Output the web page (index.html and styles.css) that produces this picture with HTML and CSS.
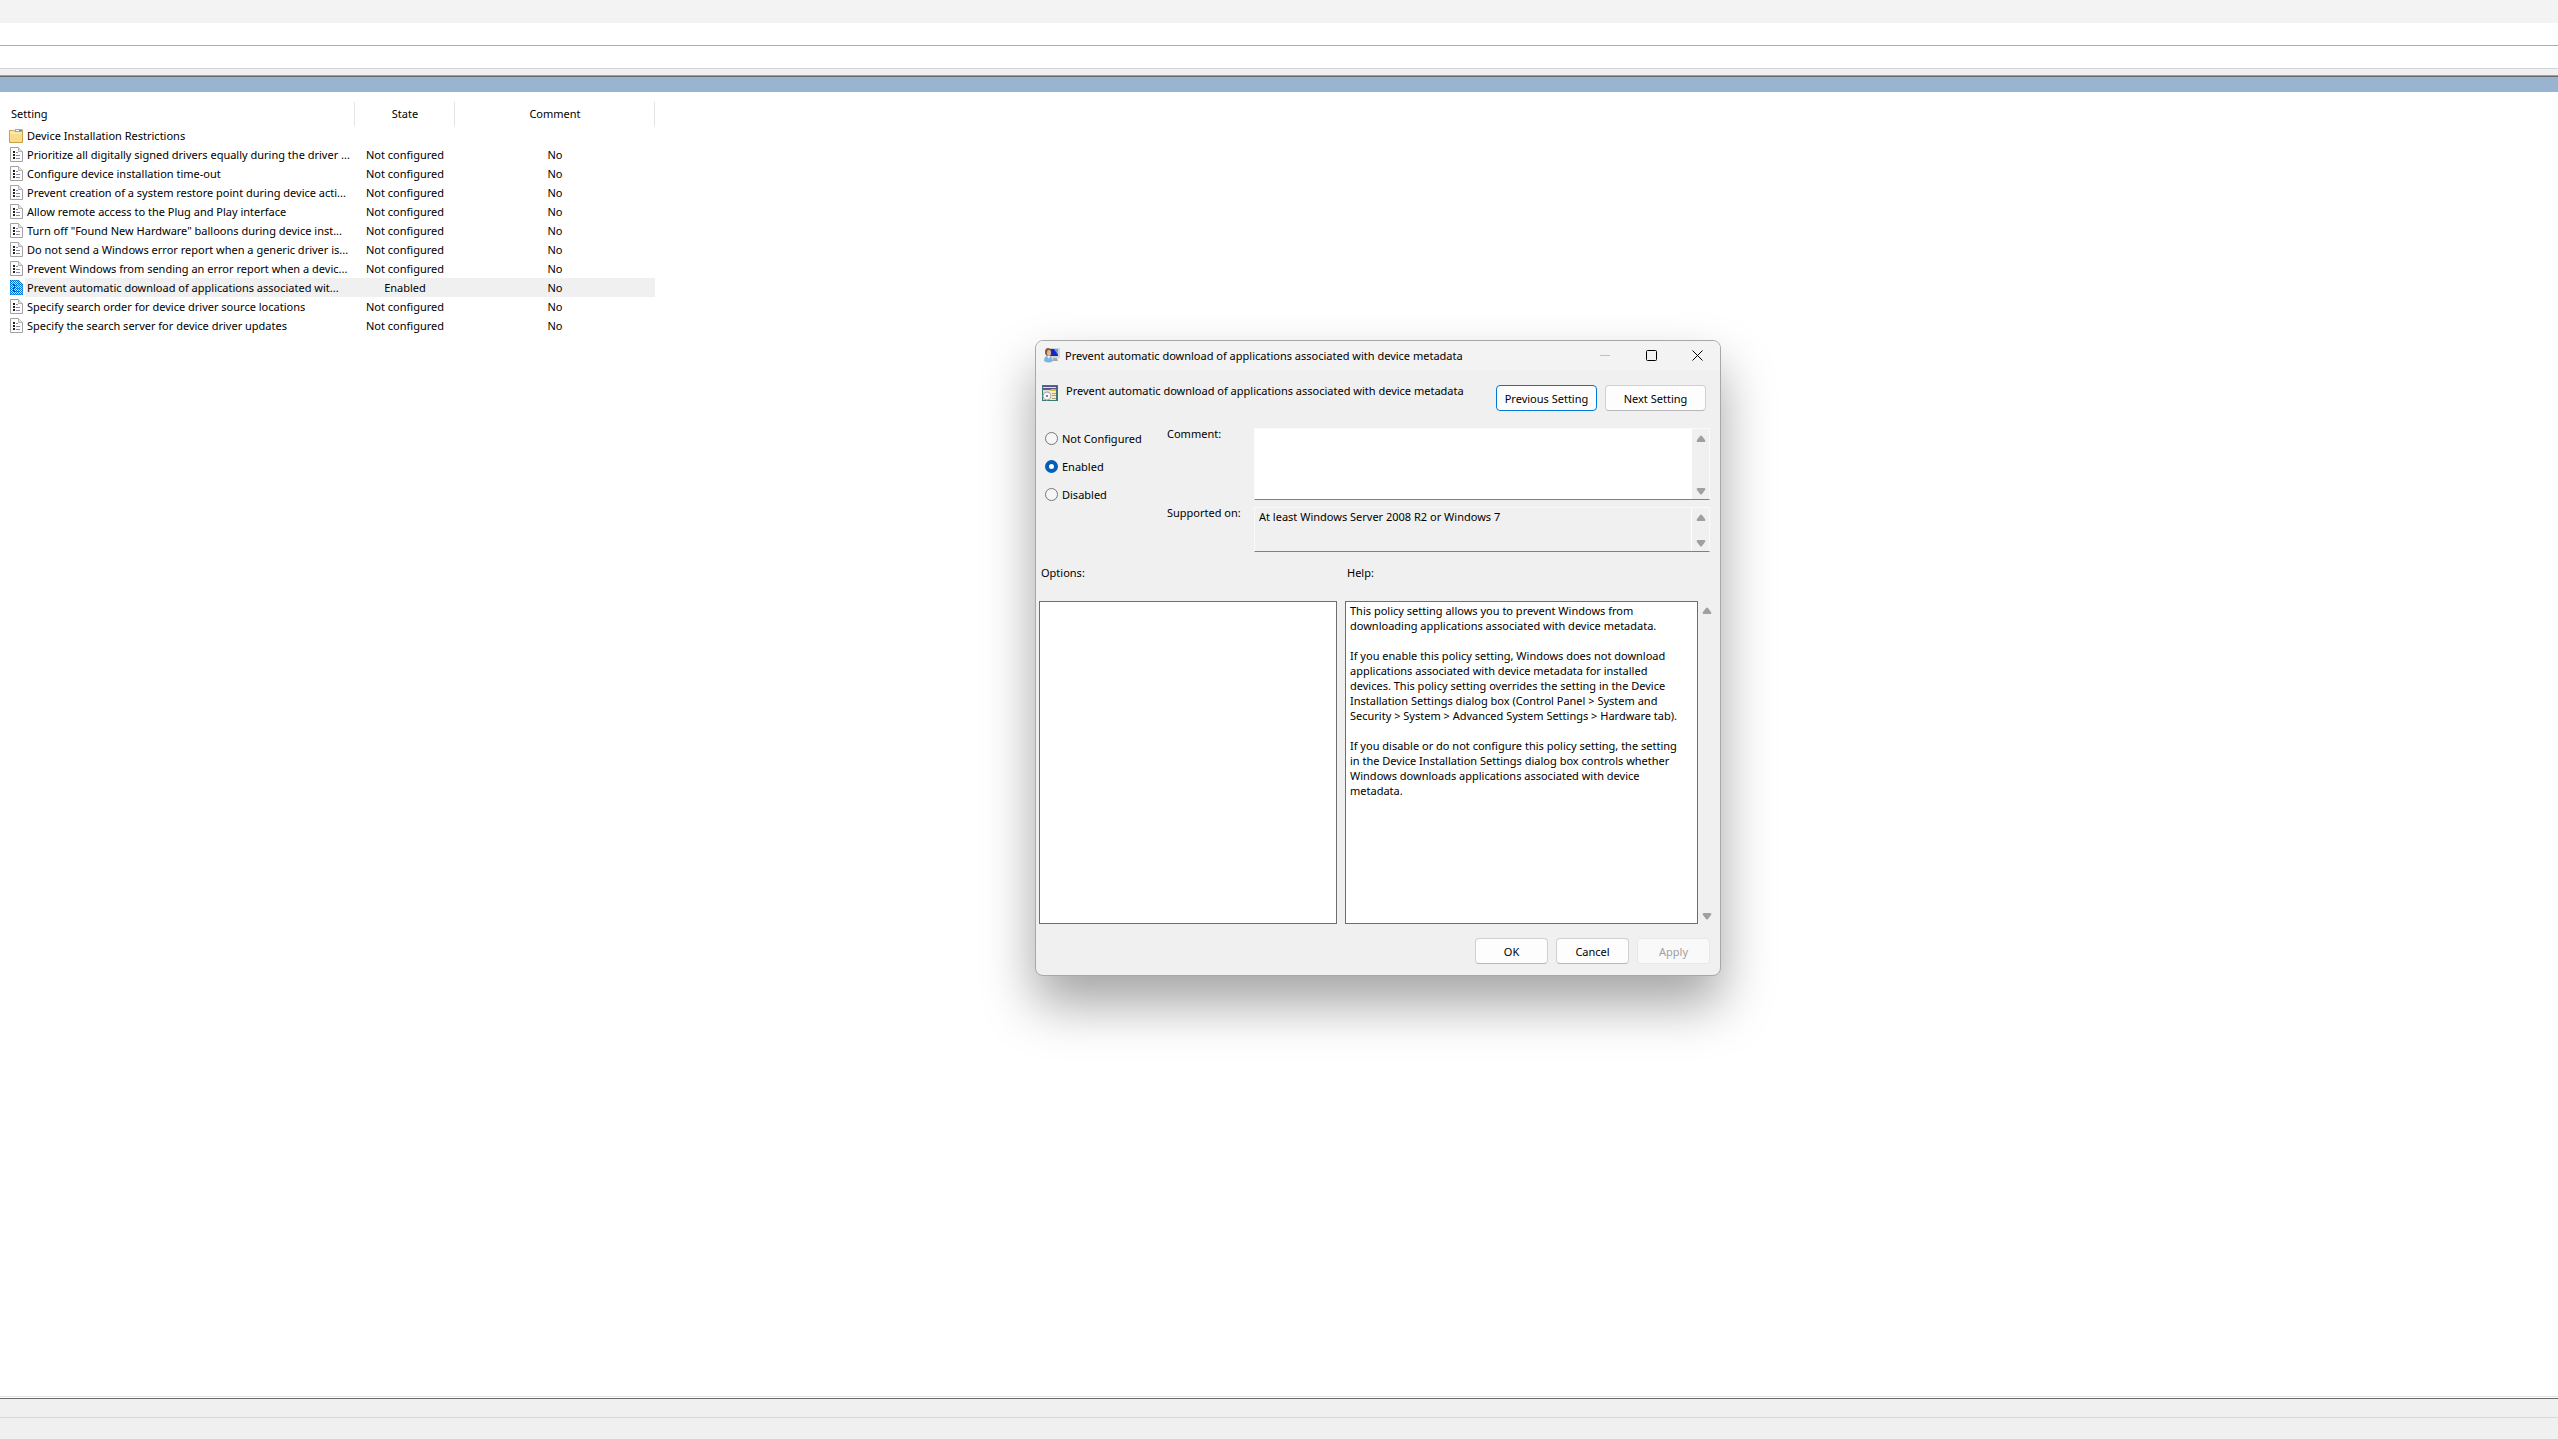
FILE: index.html
```html
<!DOCTYPE html>
<html lang="en">
<head>
<meta charset="utf-8">
<title>Local Group Policy Editor</title>
<link rel="stylesheet" href="styles.css">
</head>
<body>
<svg class="sprite" aria-hidden="true">
  <symbol id="doc" viewBox="0 0 13 15">
    <path d="M.5.5h8l4 4v10H.5z" fill="#fcfcfc" stroke="#a3a3a3"/>
    <path d="M8.500.5v4h4" fill="#e4e4e4" stroke="#b4b4b4"/>
    <path d="M3 4h2v2H3zM3 7h2v2H3zM3 10h2v2H3z" fill="#222"/>
    <path d="M6 5.500h2M6 8.500h4M6 11.500h4" stroke="#8f88a4"/>
  </symbol>
  <symbol id="up" viewBox="0 0 10 7"><path d="M4 1q1-1 2 0l3 4q1 2-1 2H2Q0 7 1 5z" fill="#a0a0a0"/></symbol>
  <symbol id="down" viewBox="0 0 10 7"><path d="M4 6q1 1 2 0l3-4q1-2-1-2H2Q0 0 1 2z" fill="#a0a0a0"/></symbol>
</svg>

<div class="console">
  <div class="menu-strip"></div>
  <div class="tool-strip"></div>
  <div class="tab-strip"></div>
  <div class="gap-strip"></div>
  <div class="banner"></div>
  <main class="list-pane">
    <table class="settings">
      <colgroup><col class="col-icon"><col class="col-name"><col class="col-state"><col class="col-comment"></colgroup>
      <thead>
        <tr><th colspan="2" class="name-head">Setting</th><th>State</th><th>Comment</th></tr>
      </thead>
      <tbody>
        <tr><td><svg class="folder" viewBox="0 0 14 14"><path d="M0 1h5l1 1V0h7l1 1v13H0z" fill="#c9a34c"/><path d="M1 3h12v10H1z" fill="#f8dc8c"/><path d="M1 2h4l1 1h7v2H1z" fill="#fbe8ae"/><path d="M7 1h5v1H7z" fill="#fff"/><path d="M10 1h2v1h-2z" fill="#4a90d0"/></svg></td><td>Device Installation Restrictions</td><td></td><td></td></tr>
        <tr><td><svg class="doc"><use href="#doc"/></svg></td><td>Prioritize all digitally signed drivers equally during the driver ...</td><td>Not configured</td><td>No</td></tr>
        <tr><td><svg class="doc"><use href="#doc"/></svg></td><td>Configure device installation time-out</td><td>Not configured</td><td>No</td></tr>
        <tr><td><svg class="doc"><use href="#doc"/></svg></td><td>Prevent creation of a system restore point during device acti...</td><td>Not configured</td><td>No</td></tr>
        <tr><td><svg class="doc"><use href="#doc"/></svg></td><td>Allow remote access to the Plug and Play interface</td><td>Not configured</td><td>No</td></tr>
        <tr><td><svg class="doc"><use href="#doc"/></svg></td><td>Turn off "Found New Hardware" balloons during device inst...</td><td>Not configured</td><td>No</td></tr>
        <tr><td><svg class="doc"><use href="#doc"/></svg></td><td>Do not send a Windows error report when a generic driver is...</td><td>Not configured</td><td>No</td></tr>
        <tr><td><svg class="doc"><use href="#doc"/></svg></td><td>Prevent Windows from sending an error report when a devic...</td><td>Not configured</td><td>No</td></tr>
        <tr class="selected"><td><svg class="doc" viewBox="0 0 13 15"><defs><pattern id="dither" width="2" height="2" patternUnits="userSpaceOnUse"><path d="M0 0h1v1H0zM1 1h1v1H1z" fill="#0078d7"/></pattern></defs><use href="#doc"/><path d="M0 0h9l4 4v11H0z" fill="#0078d7" opacity=".2"/><path d="M0 0h9l4 4v11H0z" fill="url(#dither)"/></svg></td><td>Prevent automatic download of applications associated wit...</td><td>Enabled</td><td>No</td></tr>
        <tr><td><svg class="doc"><use href="#doc"/></svg></td><td>Specify search order for device driver source locations</td><td>Not configured</td><td>No</td></tr>
        <tr><td><svg class="doc"><use href="#doc"/></svg></td><td>Specify the search server for device driver updates</td><td>Not configured</td><td>No</td></tr>
      </tbody>
    </table>
  </main>
  <div class="pane-edge"></div>
  <div class="status-top"></div>
  <footer class="status-bar"></footer>
</div>

<section class="dialog" role="dialog" aria-labelledby="dialog-title">
  <header class="title-bar">
    <svg class="title-icon" viewBox="0 0 16 16"><path d="M4 1h12v10H4z" fill="#d4d4d0"/><path d="M5 2h9v7H5z" fill="#1428c8"/><path d="M10 2h4v6z" fill="#6a9cf0"/><path d="M9 11h4l1 3H9z" fill="#a8a8a8"/><ellipse cx="4" cy="5" rx="3" ry="4" fill="#8a5a3c"/><ellipse cx="5" cy="6" rx="2" ry="3" fill="#e0b898"/><path d="M0 14q0-5 4-5t5 5q-4 3-9 0z" fill="#7cb4e0"/><path d="M3 9l2 3 1-3z" fill="#e8f4fc"/></svg>
    <h1 id="dialog-title">Prevent automatic download of applications associated with device metadata</h1>
    <button class="caption" aria-label="Minimize" disabled><svg viewBox="0 0 11 11"><path d="M0 5.500h10" stroke="#c0c0c0"/></svg></button>
    <button class="caption" aria-label="Maximize"><svg viewBox="0 0 11 11"><rect x=".5" y=".5" width="10" height="10" rx="1" fill="none" stroke="#000"/></svg></button>
    <button class="caption" aria-label="Close"><svg viewBox="0 0 11 11"><path d="M.5.5l10 10M10.500.5l-10 10" stroke="#000" fill="none"/></svg></button>
  </header>

  <div class="policy-head">
    <svg class="policy-icon" viewBox="0 0 16 16"><path d="M0 0h16v16H0z" fill="#3c7878"/><path d="M1 1h14v3H1z" fill="#54548c"/><path d="M1 2h13v1H1z" fill="#e0e0e8"/><path d="M1 5h13v10H1z" fill="#dcdcd4"/><path d="M8 6h6v9H8z" fill="#f4ecc8"/><path d="M9 4h5v2H9z" fill="#e8b820"/><circle cx="5" cy="11" r="4" fill="#f4f4f4" stroke="#a8a8a8"/><circle cx="5" cy="11" r="1" fill="#606060"/><path d="M10 8.500h4M10 10.500h4M10 13.500h4" stroke="#b0a070"/></svg>
    <p>Prevent automatic download of applications associated with device metadata</p>
    <button class="btn nav focused">Previous Setting</button>
    <button class="btn nav">Next Setting</button>
  </div>

  <div class="config">
    <div class="states" role="radiogroup">
      <label><input type="radio" name="state">Not Configured</label>
      <label><input type="radio" name="state" checked>Enabled</label>
      <label><input type="radio" name="state">Disabled</label>
    </div>
    <div class="fields">
      <label for="comment">Comment:</label>
      <div class="box comment-box">
        <textarea id="comment"></textarea>
        <span class="scroll"><svg><use href="#up"/></svg><svg><use href="#down"/></svg></span>
      </div>
      <label for="supported">Supported on:</label>
      <div class="box supported-box">
        <textarea id="supported" readonly>At least Windows Server 2008 R2 or Windows 7</textarea>
        <span class="scroll"><svg><use href="#up"/></svg><svg><use href="#down"/></svg></span>
      </div>
    </div>
  </div>

  <div class="panels">
    <h2>Options:</h2>
    <h2>Help:</h2>
    <div class="panel"></div>
    <div class="help">
      <div class="panel help-text">
        <p>This policy setting allows you to prevent Windows from<br>downloading applications associated with device metadata.</p>
        <p>If you enable this policy setting, Windows does not download<br>applications associated with device metadata for installed<br>devices. This policy setting overrides the setting in the Device<br>Installation Settings dialog box (Control Panel &gt; System and<br>Security &gt; System &gt; Advanced System Settings &gt; Hardware tab).</p>
        <p>If you disable or do not configure this policy setting, the setting<br>in the Device Installation Settings dialog box controls whether<br>Windows downloads applications associated with device<br>metadata.</p>
      </div>
      <span class="scroll"><svg><use href="#up"/></svg><svg><use href="#down"/></svg></span>
    </div>
  </div>

  <footer class="actions">
    <button class="btn">OK</button>
    <button class="btn">Cancel</button>
    <button class="btn" disabled>Apply</button>
  </footer>
</section>
</body>
</html>
```
FILE: styles.css
```css
* { box-sizing: border-box; }

body {
  margin: 0;
  font: 11px/15px "Noto Sans", "Open Sans", sans-serif;
  color: #000;
  background: #fff;
}

h1, h2, p { margin: 0; font-size: inherit; font-weight: 400; }
button, textarea { font: inherit; color: inherit; }
svg { display: block; }
.sprite { display: none; }

/* Console window */
.console { display: flex; flex-direction: column; min-height: 100vh; }
.menu-strip { height: 23px; background: #f3f3f3; }
.tool-strip { height: 23px; border-bottom: 1px solid #adadad; }
.tab-strip { height: 23px; border-bottom: 1px solid #d4d4d4; }
.gap-strip { height: 7px; background: #f0f0f0; border-bottom: 1px solid #a0a0a0; }
.banner { height: 16px; border-top: 1px solid #696969; background: #99b4d1; }
.list-pane { flex: 1; padding-top: 10px; }
.pane-edge { height: 3px; border-top: 1px solid #e3e3e3; border-bottom: 1px solid #696969; }
.status-top { height: 19px; background: #f0f0f0; border-bottom: 1px solid #d7d7d7; }
.status-bar { height: 21px; background: #f0f0f0; }

/* Settings list */
.settings { width: 655px; table-layout: fixed; border-collapse: collapse; }
.col-icon { width: 25px; }
.col-name { width: 330px; }
.col-state { width: 100px; }
.col-comment { width: 200px; }
.settings th {
  height: 24px;
  padding: 0 0 2px;
  font-weight: 400;
  background: linear-gradient(#e5e5e5, #e5e5e5) right / 1px 100% no-repeat;
}
.settings .name-head { padding-left: 11px; text-align: left; }
.settings td { height: 19px; padding: 0; text-align: center; white-space: nowrap; line-height: 15px; }
.settings td:first-child { padding-left: 9px; }
.settings td:nth-child(2) { padding-left: 2px; text-align: left; }
.settings .selected td:not(:first-child) { background: #f0f0f0; }
.doc { width: 13px; height: 15px; margin-left: 1px; }
.folder { width: 14px; height: 14px; }

/* Policy dialog, floating over the console */
.dialog {
  position: absolute;
  top: 340px;
  left: 1035px;
  width: 686px;
  overflow: hidden;
  border: 1px solid #a8a8a8;
  border-radius: 8px;
  background: #f0f0f0;
  box-shadow: 0 28px 52px rgba(0, 0, 0, .36);
}
.title-bar { display: flex; align-items: center; height: 30px; padding: 0 0 2px 8px; background: #f3f3f3; }
.title-icon { width: 16px; height: 16px; margin-right: 5px; }
.title-bar h1 { flex: 1; white-space: nowrap; }
.caption { display: grid; place-items: center; width: 46px; height: 28px; padding: 0; border: 0; background: none; }
.caption svg { width: 11px; height: 11px; }

.policy-head { display: flex; gap: 8px; padding: 14px 14px 0 6px; }
.policy-icon { width: 16px; height: 16px; }
.policy-head p { flex: 1; line-height: 12px; white-space: nowrap; }

.btn {
  width: 73px;
  height: 26px;
  padding: 0;
  border: 1px solid #d0d0d0;
  border-bottom-color: #b8b8b8;
  border-radius: 4px;
  background: #fdfdfd;
}
.btn.nav { width: 101px; }
.btn.focused { border-color: #0078d4; }
.btn:disabled { border-color: #e8e8e8; background: #f9f9f9; color: #a0a0a0; }

.config { display: flex; padding: 17px 10px 0 9px; }
.states { display: flex; flex-direction: column; gap: 12px; width: 122px; padding-top: 2px; }
.states label { display: flex; align-items: center; gap: 4px; height: 16px; }
.states input {
  appearance: none;
  width: 13px;
  height: 13px;
  margin: 0;
  border: 1px solid #767676;
  border-radius: 50%;
  background: #f6f6f6;
}
.states input:checked { border: 4px solid #0060b8; background: #fff; }

.fields { flex: 1; display: grid; grid-template-columns: 87px 1fr; row-gap: 7px; }
.fields label { line-height: 12px; }
.box { display: flex; border: 1px solid #fafafa; border-bottom-color: #808080; }
.comment-box { height: 72px; background: #fff; }
.supported-box { height: 45px; }
.box textarea { flex: 1; padding: 1px 4px; border: 0; outline: 0; resize: none; background: none; overflow: hidden; }
.scroll { display: flex; flex-direction: column; align-items: center; justify-content: space-between; width: 17px; padding: 6px 0 4px; background: #f0f0f0; }
.scroll svg { width: 10px; height: 7px; }
.supported-box .scroll { border-left: 1px solid #fff; width: 18px; }

.panels { display: grid; grid-template-columns: 298px 1fr; column-gap: 8px; padding: 13px 5px 0 3px; }
.panels h2 { height: 36px; padding-left: 2px; }
.panel { height: 323px; border: 1px solid #6e6e6e; background: #fff; }
.help { display: flex; }
.help-text { flex: 1; padding: 1px 4px; white-space: nowrap; }
.help-text p + p { margin-top: 15px; }

.actions { display: flex; justify-content: flex-end; gap: 8px; padding: 14px 10px 11px; }
```
